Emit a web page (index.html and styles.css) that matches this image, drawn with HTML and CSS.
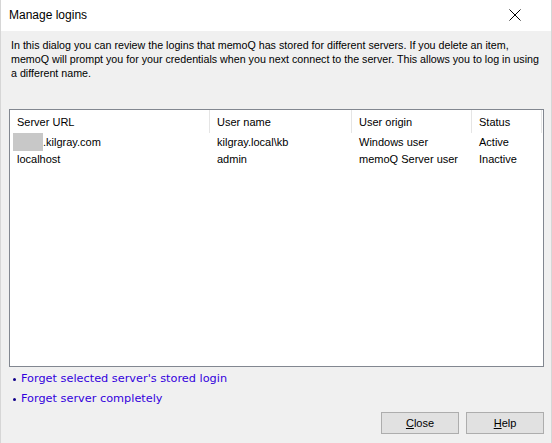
FILE: index.html
```html
<!DOCTYPE html>
<html>
<head>
<meta charset="utf-8">
<link rel="stylesheet" href="styles.css">
</head>
<body>
<div class="window">
  <div class="titlebar">
    <span class="title">Manage logins</span>
    <svg class="close-x" width="12" height="12" viewBox="0 0 12 12"><path d="M0.5 0.5 L11.5 11.5 M11.5 0.5 L0.5 11.5" stroke="#000" stroke-width="1" fill="none"/></svg>
  </div>
  <div class="body">
    <p class="desc">In this dialog you can review the logins that memoQ has stored for different servers. If you delete an item, memoQ will prompt you for your credentials when you next connect to the server. This allows you to log in using a different name.</p>
    <div class="list">
      <div class="row header">
        <div class="c c1">Server URL</div>
        <div class="c c2">User name</div>
        <div class="c c3">User origin</div>
        <div class="c c4">Status</div>
        <div class="c c5"></div>
      </div>
      <div class="row">
        <div class="c c1"><span class="blur"></span>.kilgray.com</div>
        <div class="c c2">kilgray.local\kb</div>
        <div class="c c3">Windows user</div>
        <div class="c c4">Active</div>
      </div>
      <div class="row">
        <div class="c c1">localhost</div>
        <div class="c c2">admin</div>
        <div class="c c3">memoQ Server user</div>
        <div class="c c4">Inactive</div>
      </div>
    </div>
    <ul class="links">
      <li>Forget selected server's stored login</li>
      <li>Forget server completely</li>
    </ul>
    <div class="buttons">
      <button class="btn"><u>C</u>lose</button>
      <button class="btn"><u>H</u>elp</button>
    </div>
  </div>
</div>
</body>
</html>
```
FILE: styles.css
```css
html, body { margin: 0; padding: 0; }
body { width: 552px; height: 443px; overflow: hidden; background: #f0f0f0; font-family: "Liberation Sans", Arial, sans-serif; font-size: 11px; color: #000; }
.window { width: 552px; height: 443px; display: flex; flex-direction: column; box-sizing: border-box; border-left: 1px solid #d6d6d6; border-right: 1px solid #d6d6d6; }
.titlebar { height: 31px; background: #fff; display: flex; align-items: center; justify-content: space-between; padding: 0 30px 0 8px; flex: none; }
.title { font-size: 12px; font-family: "Liberation Sans", Arial, sans-serif; padding-bottom: 1px; }
.close-x { display: block; margin-top: -1px; }
.body { flex: 1; display: flex; flex-direction: column; padding: 0 7px 0 8px; }
.desc { margin: 7px 0 0 2px; line-height: 14px; width: 530px; font-size: 10.7px; }
.list { margin-top: 29px; height: 258px; background: #fff; border: 1px solid #828790; box-sizing: border-box; flex: none; }
.row { display: flex; height: 17px; align-items: center; }
.row.header { height: 23px; }
.header .c { border-right: 1px solid #e5e5e5; height: 23px; display: flex; align-items: center; }
.c { box-sizing: border-box; padding-left: 7px; white-space: nowrap; flex: none; display: flex; align-items: center; }
.c1 { width: 200px; }
.c2 { width: 142px; }
.c3 { width: 120px; }
.c4 { width: 70px; }
.c5 { width: 0; padding: 0; }
.header .c5 { border-right: none; }
.blur { display: inline-block; width: 30px; height: 18px; background: #c8c8c8; margin-left: -4px; }
.links { list-style: none; margin: 5px 0 0 0; padding: 0 0 0 4px; font-family: "DejaVu Sans", Verdana, sans-serif; font-size: 11.3px; color: #3300dd; }
.links li { height: 20px; line-height: 14px; display: flex; align-items: flex-start; }
.links li::before { content: ""; width: 3px; height: 3px; border-radius: 50%; background: #10008a; margin: 6px 5px 0 0; flex: none; }
.buttons { display: flex; justify-content: flex-end; gap: 7px; margin-top: 0px; }
.btn { width: 78px; height: 22px; background: #e1e1e1; border: 1px solid #adadad; font-family: "Liberation Sans", Arial, sans-serif; font-size: 11px; padding: 0; color: #000; }
```
